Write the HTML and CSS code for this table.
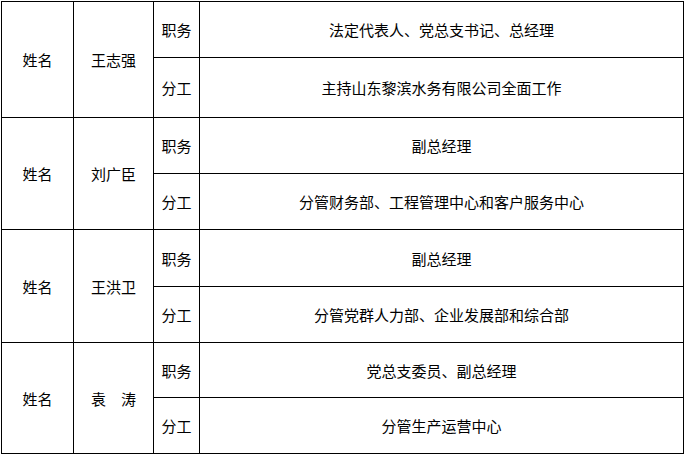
FILE: index.html
```html
<!DOCTYPE html>
<html lang="zh-CN">
<head>
<meta charset="utf-8">
<link rel="stylesheet" href="styles.css">
</head>
<body>
<div class="sheet">
  <div class="cell name r1">姓名</div>
  <div class="cell person r1">王志强</div>
  <div class="cell label">职务</div>
  <div class="cell value">法定代表人、党总支书记、总经理</div>
  <div class="cell label">分工</div>
  <div class="cell value">主持山东黎滨水务有限公司全面工作</div>

  <div class="cell name r2">姓名</div>
  <div class="cell person r2">刘广臣</div>
  <div class="cell label">职务</div>
  <div class="cell value">副总经理</div>
  <div class="cell label">分工</div>
  <div class="cell value">分管财务部、工程管理中心和客户服务中心</div>

  <div class="cell name r3">姓名</div>
  <div class="cell person r3">王洪卫</div>
  <div class="cell label">职务</div>
  <div class="cell value">副总经理</div>
  <div class="cell label">分工</div>
  <div class="cell value">分管党群人力部、企业发展部和综合部</div>

  <div class="cell name r4">姓名</div>
  <div class="cell person r4">袁　涛</div>
  <div class="cell label">职务</div>
  <div class="cell value">党总支委员、副总经理</div>
  <div class="cell label">分工</div>
  <div class="cell value">分管生产运营中心</div>
</div>
</body>
</html>
```

FILE: styles.css
```css
html, body {
  margin: 0;
  padding: 0;
  background: #ffffff;
}

body {
  padding: 1px 0 0 1px;
  font-family: "Noto Sans CJK SC", "Liberation Sans", sans-serif;
  font-size: 15px;
  color: #000000;
}

.sheet {
  display: grid;
  grid-template-columns: 71px 79px 45px 483px;
  grid-template-rows: 55px 59px 55px 55px 56px 55px 54px 55px;
  gap: 1px;
  padding: 1px;
  background: #000000;
  width: max-content;
}

.cell {
  background: #ffffff;
  display: flex;
  align-items: center;
  justify-content: center;
  line-height: 1;
  white-space: nowrap;
}

.name { grid-column: 1; }
.person { grid-column: 2; }
.label { grid-column: 3; }
.value { grid-column: 4; }

.r1 { grid-row: 1 / span 2; }
.r2 { grid-row: 3 / span 2; }
.r3 { grid-row: 5 / span 2; }
.r4 { grid-row: 7 / span 2; }
```
